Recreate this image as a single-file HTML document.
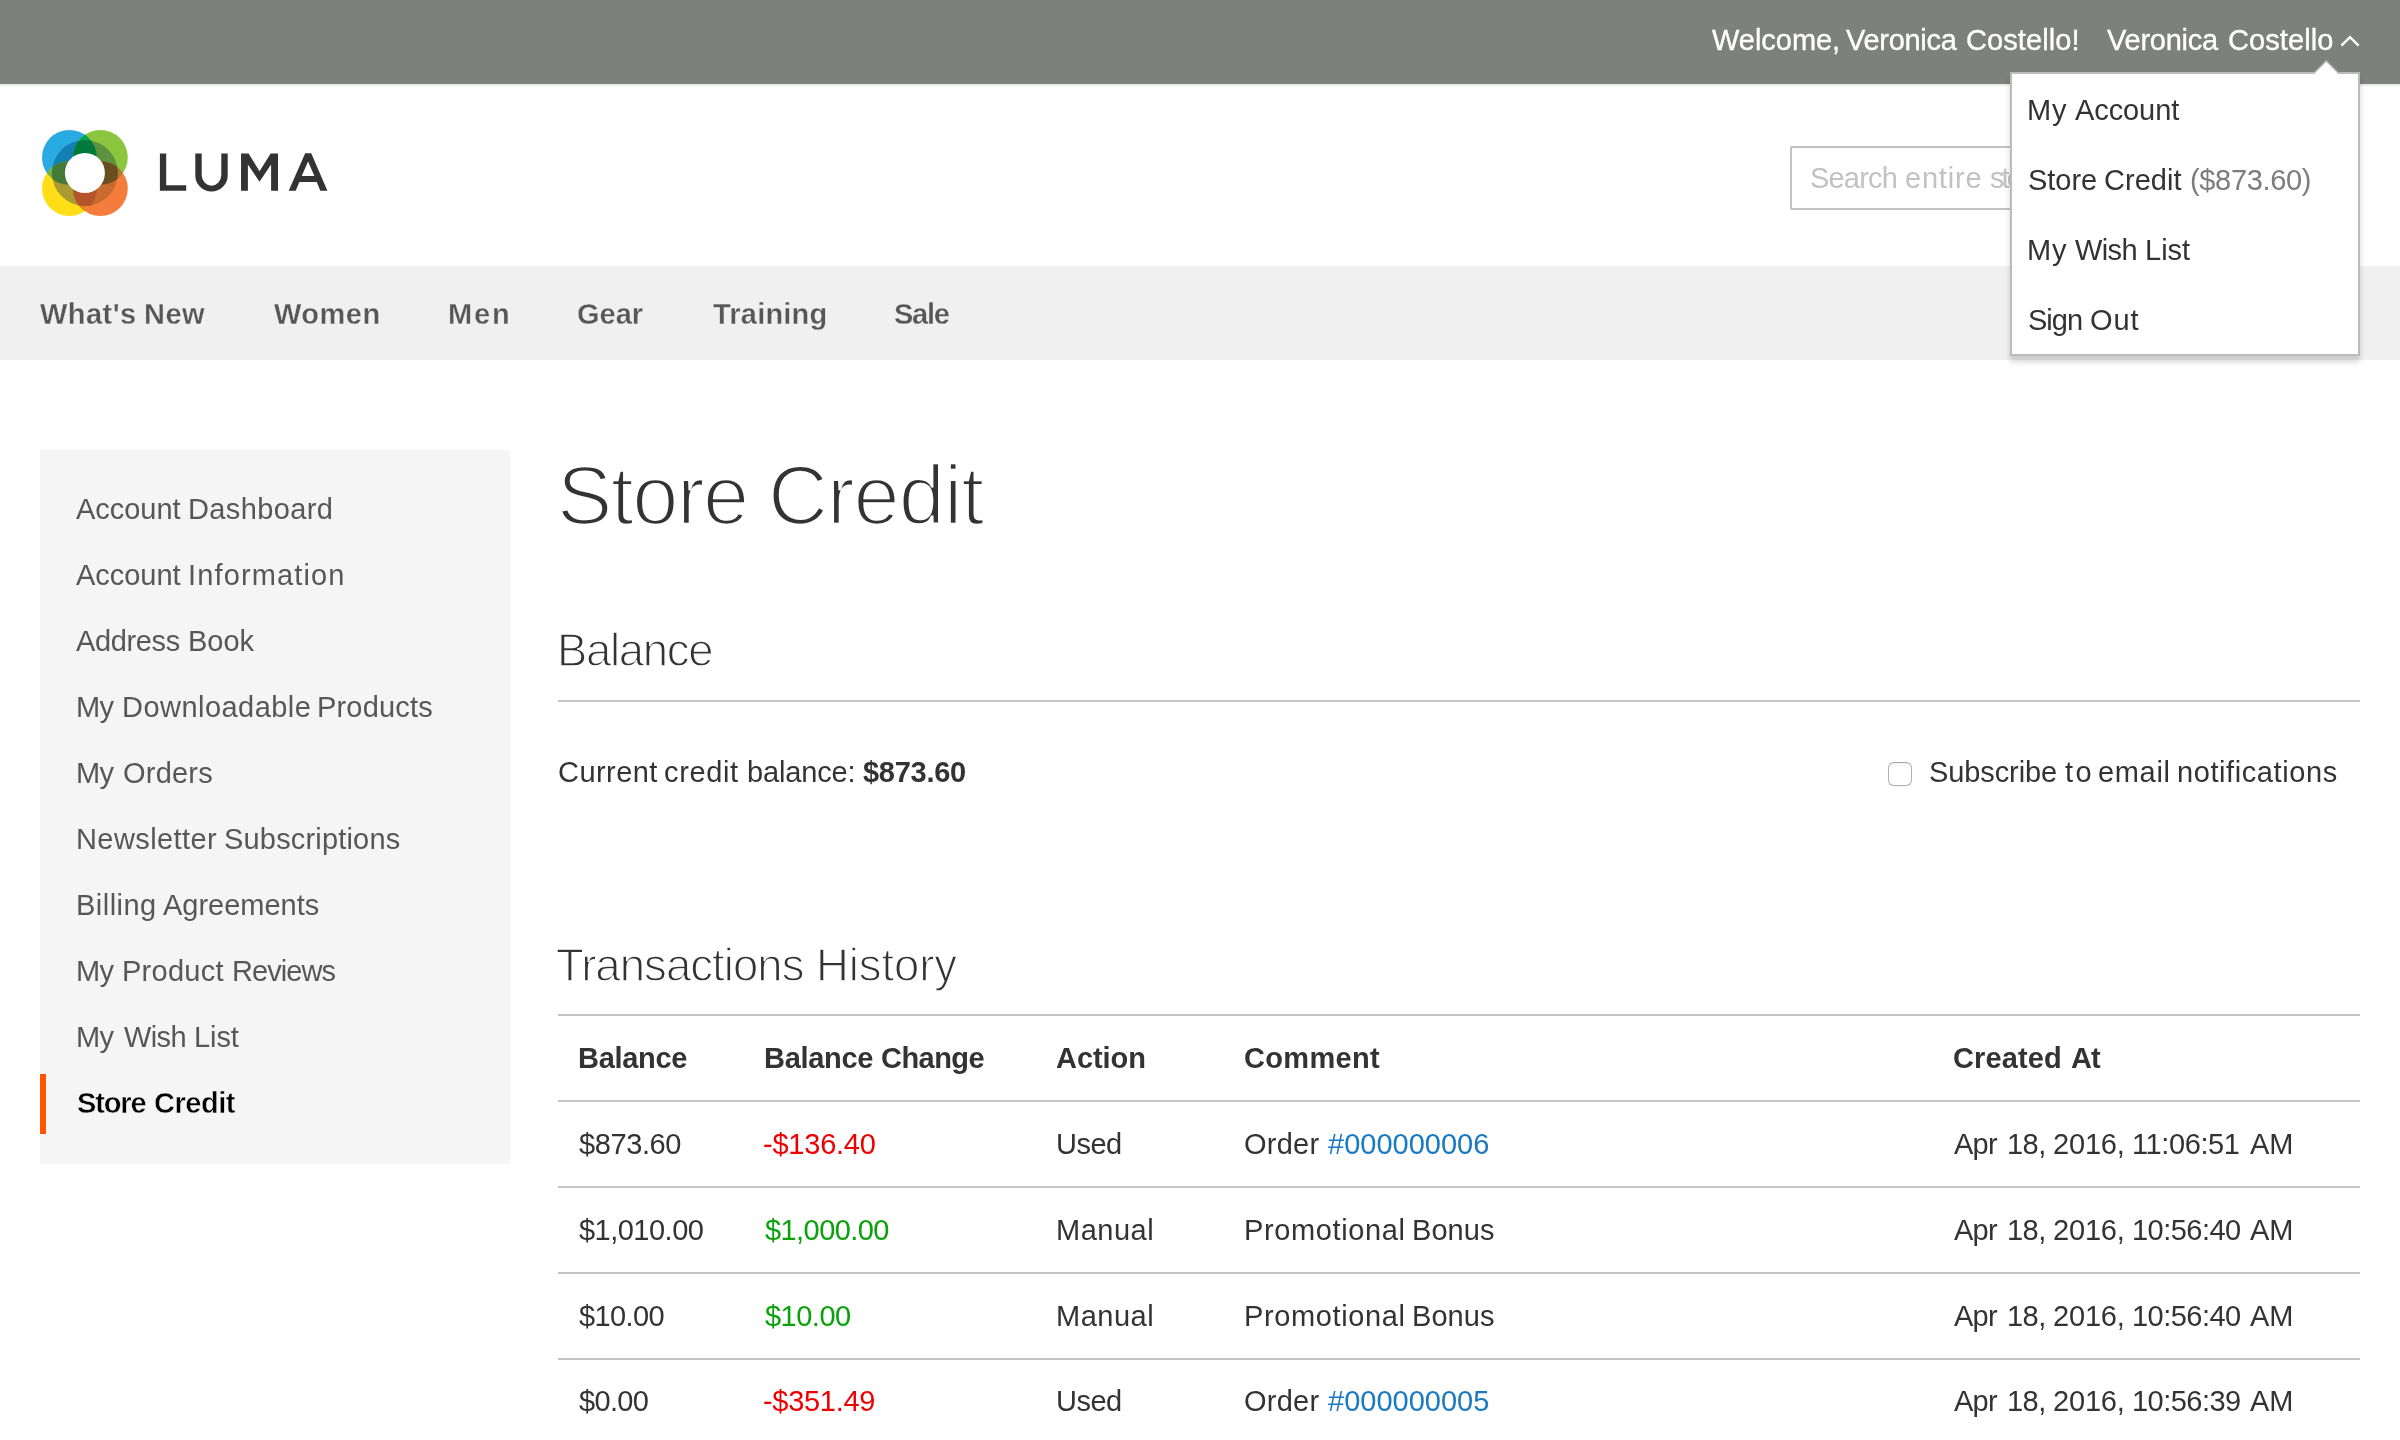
<!DOCTYPE html>
<html lang="en">
<head>
<meta charset="utf-8">
<title>Store Credit</title>
<style>
html,body{margin:0;padding:0;background:#fff;}
body{width:2400px;height:1440px;position:relative;overflow:hidden;font-family:"Liberation Sans",sans-serif;font-size:28px;color:#333;}
.abs{position:absolute;}
.t{position:absolute;white-space:nowrap;line-height:1;will-change:transform;font-family:"Liberation Sans",sans-serif;font-size:29px;}
.light{-webkit-text-stroke-color:#fff;}
.hw{-webkit-text-stroke:0.35px #fff;}
.sbn{-webkit-text-stroke:0.3px #f0f0f0;}
.sbs{-webkit-text-stroke:0.45px #f5f5f5;}
.l80{-webkit-text-stroke-width:2.6px;}
.l44{-webkit-text-stroke-width:1.3px;}
.hdr{left:0;top:0;width:2400px;height:84px;background:#7e807d;}
.hdrline{left:0;top:84px;width:2400px;height:2px;background:#e9eae8;}
.nav{left:0;top:266px;width:2400px;height:94px;background:#f0f0f0;}
.side{left:40px;top:450px;width:470px;height:714px;background:#f5f5f5;}
.cur{left:40px;top:1074px;width:6px;height:60px;background:#ff5501;}
.hr{left:558px;width:1802px;height:2px;background:#c4c4c4;}
.search{left:1790px;top:146px;width:300px;height:60px;border:2px solid #c2c2c2;border-radius:2px;background:#fff;overflow:hidden;}
.dd{left:2010px;top:72px;width:346px;height:280px;background:#fff;border:2px solid #bbb;box-shadow:0 6px 6px rgba(0,0,0,.16);}
.cb{left:1888px;top:762px;width:22px;height:22px;border:1px solid #b1b1b1;border-top-color:#a4a4a4;border-radius:6px;background:linear-gradient(#f4f4f4,#fff 22%,#fff);box-shadow:0 1px 1px rgba(0,0,0,.05);}
</style>
</head>
<body>
<div class="abs hdr"></div>
<div class="abs hdrline"></div>

<!-- logo -->
<svg class="abs" style="left:36px;top:124px" width="300" height="100" viewBox="36 124 300 100">
  <defs>
    <clipPath id="cB"><circle cx="69.4" cy="157.4" r="27.4"/></clipPath>
    <clipPath id="cG"><circle cx="100.4" cy="157.4" r="27.4"/></clipPath>
    <clipPath id="cY"><circle cx="69.4" cy="188.6" r="27.4"/></clipPath>
    <clipPath id="cO"><circle cx="100.4" cy="188.6" r="27.4"/></clipPath>
    <clipPath id="cR"><circle cx="84.9" cy="173" r="33"/></clipPath>
  </defs>
  <!-- outer (light) layer -->
  <circle cx="69.4" cy="157.4" r="27.4" fill="#29abe2"/>
  <circle cx="100.4" cy="157.4" r="27.4" fill="#8cc63f"/>
  <circle cx="69.4" cy="188.6" r="27.4" fill="#ffde17"/>
  <circle cx="100.4" cy="188.6" r="27.4" fill="#f47d3c"/>
  <circle cx="100.4" cy="157.4" r="27.4" fill="#00a651" clip-path="url(#cB)"/>
  <circle cx="69.4" cy="188.6" r="27.4" fill="#72b043" clip-path="url(#cB)"/>
  <circle cx="100.4" cy="188.6" r="27.4" fill="#b07c3a" clip-path="url(#cG)"/>
  <circle cx="100.4" cy="188.6" r="27.4" fill="#f58220" clip-path="url(#cY)"/>
  <!-- inner ring (dark) layer -->
  <g clip-path="url(#cR)">
    <circle cx="69.4" cy="157.4" r="27.4" fill="#1380b4"/>
    <circle cx="100.4" cy="157.4" r="27.4" fill="#5d9340"/>
    <circle cx="69.4" cy="188.6" r="27.4" fill="#a99b32"/>
    <circle cx="100.4" cy="188.6" r="27.4" fill="#c96a31"/>
    <circle cx="100.4" cy="157.4" r="27.4" fill="#00793b" clip-path="url(#cB)"/>
    <circle cx="69.4" cy="188.6" r="27.4" fill="#427a36" clip-path="url(#cB)"/>
    <circle cx="100.4" cy="188.6" r="27.4" fill="#6b4e1f" clip-path="url(#cG)"/>
    <circle cx="100.4" cy="188.6" r="27.4" fill="#b4542a" clip-path="url(#cY)"/>
  </g>
  <circle cx="84.9" cy="173" r="20" fill="#fff"/>
  <!-- LUMA wordmark -->
  <g fill="#333">
    <path d="M159.9,153.5h6.3v31.7h20v5.5h-26.3z"/>
    <path d="M195.3,153.5h6.4v21.6a9.8,10.6 0 0 0 19.6,0v-21.6h6.4v21.8a16.2,16.3 0 0 1 -32.4,0z"/>
    <path d="M241.05,190.7V153.5H248.6L259.5,171.3L270.7,153.5H278V190.7H271.1V164.5L259.5,181.8L247.9,164.5V190.7Z"/>
    <path fill-rule="evenodd" d="M288.7,190.7L305.2,153.2H311.2L327.4,190.7H320.3L316.8,181.9H299.4L295.7,190.7ZM301.7,176H314.4L308.1,161.4Z"/>
  </g>
</svg>

<!-- search -->
<div class="abs search"></div>
<div class="t ph" style="left:1809.60px;top:164.10px;letter-spacing:-0.821px;color:#c2c2c2">Search</div>
<div class="t ph" style="left:1904.60px;top:164.10px;letter-spacing:0.797px;color:#c2c2c2">entire</div>
<div class="t ph" style="left:1990.00px;top:164.10px;letter-spacing:-2.900px;color:#c2c2c2">store here...</div>

<div class="abs nav"></div>
<div class="abs side"></div>
<div class="abs cur"></div>

<div class="abs hr" style="top:700px"></div>
<div class="abs hr" style="top:1014px"></div>
<div class="abs hr" style="top:1100px"></div>
<div class="abs hr" style="top:1186px"></div>
<div class="abs hr" style="top:1272px"></div>
<div class="abs hr" style="top:1358px"></div>

<div class="abs cb"></div>

<div class="t hw" style="left:1711.70px;top:26.00px;letter-spacing:-0.033px;color:#fff">Welcome,</div>
<div class="t hw" style="left:1845.80px;top:26.00px;letter-spacing:-0.290px;color:#fff">Veronica</div>
<div class="t hw" style="left:1965.70px;top:26.00px;letter-spacing:0.091px;color:#fff">Costello!</div>
<div class="t hw" style="left:2107.30px;top:26.00px;letter-spacing:-0.247px;color:#fff">Veronica</div>
<div class="t hw" style="left:2227.70px;top:26.00px;letter-spacing:0.094px;color:#fff">Costello</div>
<div class="t sbn" style="left:40.00px;top:299.75px;letter-spacing:0.446px;color:#575757;font-weight:700">What's</div>
<div class="t sbn" style="left:144.00px;top:299.75px;letter-spacing:0.464px;color:#575757;font-weight:700">New</div>
<div class="t sbn" style="left:274.25px;top:299.75px;letter-spacing:0.506px;color:#575757;font-weight:700">Women</div>
<div class="t sbn" style="left:448.25px;top:299.75px;letter-spacing:1.857px;color:#575757;font-weight:700">Men</div>
<div class="t sbn" style="left:577.25px;top:299.75px;letter-spacing:-0.021px;color:#575757;font-weight:700">Gear</div>
<div class="t sbn" style="left:712.50px;top:299.75px;letter-spacing:0.204px;color:#575757;font-weight:700">Training</div>
<div class="t sbn" style="left:894.25px;top:299.75px;letter-spacing:-1.259px;color:#575757;font-weight:700">Sale</div>
<div class="t" style="left:76.25px;top:495.30px;letter-spacing:-0.038px;color:#575757">Account</div>
<div class="t" style="left:188.00px;top:495.30px;letter-spacing:0.376px;color:#575757">Dashboard</div>
<div class="t" style="left:76.25px;top:561.32px;letter-spacing:-0.038px;color:#575757">Account</div>
<div class="t" style="left:188.00px;top:561.32px;letter-spacing:1.131px;color:#575757">Information</div>
<div class="t" style="left:76.25px;top:627.34px;letter-spacing:-0.356px;color:#575757">Address</div>
<div class="t" style="left:188.00px;top:627.34px;letter-spacing:-0.033px;color:#575757">Book</div>
<div class="t" style="left:76.00px;top:693.36px;letter-spacing:-0.657px;color:#575757">My</div>
<div class="t" style="left:122.25px;top:693.36px;letter-spacing:0.462px;color:#575757">Downloadable</div>
<div class="t" style="left:317.25px;top:693.36px;letter-spacing:0.187px;color:#575757">Products</div>
<div class="t" style="left:76.00px;top:759.38px;letter-spacing:-0.657px;color:#575757">My</div>
<div class="t" style="left:123.25px;top:759.38px;letter-spacing:0.224px;color:#575757">Orders</div>
<div class="t" style="left:75.50px;top:825.40px;letter-spacing:0.419px;color:#575757">Newsletter</div>
<div class="t" style="left:224.30px;top:825.40px;letter-spacing:0.176px;color:#575757">Subscriptions</div>
<div class="t" style="left:75.50px;top:891.42px;letter-spacing:0.476px;color:#575757">Billing</div>
<div class="t" style="left:163.30px;top:891.42px;letter-spacing:-0.017px;color:#575757">Agreements</div>
<div class="t" style="left:76.00px;top:957.44px;letter-spacing:-0.657px;color:#575757">My</div>
<div class="t" style="left:122.25px;top:957.44px;letter-spacing:0.261px;color:#575757">Product</div>
<div class="t" style="left:231.80px;top:957.44px;letter-spacing:-0.914px;color:#575757">Reviews</div>
<div class="t" style="left:76.00px;top:1023.46px;letter-spacing:-0.657px;color:#575757">My</div>
<div class="t" style="left:123.50px;top:1023.46px;letter-spacing:-0.605px;color:#575757">Wish</div>
<div class="t" style="left:193.50px;top:1023.46px;letter-spacing:-0.090px;color:#575757">List</div>
<div class="t sbs" style="left:76.70px;top:1089.40px;letter-spacing:-1.125px;color:#000;font-weight:700">Store</div>
<div class="t sbs" style="left:154.10px;top:1089.40px;letter-spacing:-0.466px;color:#000;font-weight:700">Credit</div>
<div class="t light l80" style="left:556.82px;top:453.75px;letter-spacing:-1.528px;color:#333;font-size:83px">Store</div>
<div class="t light l80" style="left:767.57px;top:453.75px;letter-spacing:-0.996px;color:#333;font-size:83px">Credit</div>
<div class="t light l44" style="left:556.78px;top:627.75px;letter-spacing:-1.324px;color:#333;font-size:45.5px">Balance</div>
<div class="t" style="left:557.75px;top:757.75px;letter-spacing:0.435px;color:#333">Current</div>
<div class="t" style="left:664.00px;top:757.75px;letter-spacing:0.629px;color:#333">credit</div>
<div class="t" style="left:746.50px;top:757.75px;letter-spacing:-0.155px;color:#333">balance:</div>
<div class="t" style="left:863.00px;top:757.75px;letter-spacing:-0.283px;color:#333;font-weight:700">$873.60</div>
<div class="t" style="left:1928.80px;top:757.80px;letter-spacing:-0.104px;color:#333">Subscribe</div>
<div class="t" style="left:2064.50px;top:757.80px;letter-spacing:2.543px;color:#333">to</div>
<div class="t" style="left:2098.00px;top:757.80px;letter-spacing:0.661px;color:#333">email</div>
<div class="t" style="left:2177.30px;top:757.80px;letter-spacing:0.588px;color:#333">notifications</div>
<div class="t light l44" style="left:556.28px;top:942.50px;letter-spacing:-0.941px;color:#333;font-size:45.5px">Transactions</div>
<div class="t light l44" style="left:815.78px;top:942.50px;letter-spacing:-0.106px;color:#333;font-size:45.5px">History</div>
<div class="t" style="left:577.75px;top:1043.50px;letter-spacing:-0.308px;color:#333;font-weight:700">Balance</div>
<div class="t" style="left:764.00px;top:1043.50px;letter-spacing:-0.308px;color:#333;font-weight:700">Balance</div>
<div class="t" style="left:881.00px;top:1043.50px;letter-spacing:-0.543px;color:#333;font-weight:700">Change</div>
<div class="t" style="left:1056.25px;top:1043.50px;letter-spacing:-0.050px;color:#333;font-weight:700">Action</div>
<div class="t" style="left:1244.00px;top:1043.50px;letter-spacing:0.321px;color:#333;font-weight:700">Comment</div>
<div class="t" style="left:1953.40px;top:1043.50px;letter-spacing:0.138px;color:#333;font-weight:700">Created</div>
<div class="t" style="left:2071.10px;top:1043.50px;letter-spacing:-0.943px;color:#333;font-weight:700">At</div>
<div class="t" style="left:578.75px;top:1129.60px;letter-spacing:-0.408px;color:#333">$873.60</div>
<div class="t" style="left:763.25px;top:1129.60px;letter-spacing:-0.229px;color:#ee0000">-$136.40</div>
<div class="t" style="left:1055.50px;top:1129.60px;letter-spacing:-0.524px;color:#333">Used</div>
<div class="t" style="left:1244.00px;top:1129.60px;letter-spacing:0.257px;color:#333">Order</div>
<div class="t" style="left:1328.00px;top:1129.60px;letter-spacing:0.010px;color:#1979c3">#000000006</div>
<div class="t" style="left:1954.40px;top:1129.60px;letter-spacing:-0.736px;color:#333">Apr</div>
<div class="t" style="left:2007.10px;top:1129.60px;letter-spacing:-0.528px;color:#333">18,</div>
<div class="t" style="left:2052.70px;top:1129.60px;letter-spacing:-0.178px;color:#333">2016,</div>
<div class="t" style="left:2131.80px;top:1129.60px;letter-spacing:-0.401px;color:#333">11:06:51</div>
<div class="t" style="left:2249.90px;top:1129.60px;letter-spacing:-0.043px;color:#333">AM</div>
<div class="t" style="left:578.75px;top:1215.50px;letter-spacing:-0.517px;color:#333">$1,010.00</div>
<div class="t" style="left:765.00px;top:1215.50px;letter-spacing:-0.579px;color:#0aa10a">$1,000.00</div>
<div class="t" style="left:1055.50px;top:1215.50px;letter-spacing:0.516px;color:#333">Manual</div>
<div class="t" style="left:1243.50px;top:1215.50px;letter-spacing:0.620px;color:#333">Promotional</div>
<div class="t" style="left:1411.75px;top:1215.50px;letter-spacing:0.068px;color:#333">Bonus</div>
<div class="t" style="left:1954.40px;top:1215.50px;letter-spacing:-0.736px;color:#333">Apr</div>
<div class="t" style="left:2007.10px;top:1215.50px;letter-spacing:-0.528px;color:#333">18,</div>
<div class="t" style="left:2052.70px;top:1215.50px;letter-spacing:-0.178px;color:#333">2016,</div>
<div class="t" style="left:2131.80px;top:1215.50px;letter-spacing:-0.522px;color:#333">10:56:40</div>
<div class="t" style="left:2249.90px;top:1215.50px;letter-spacing:-0.043px;color:#333">AM</div>
<div class="t" style="left:578.75px;top:1301.50px;letter-spacing:-0.614px;color:#333">$10.00</div>
<div class="t" style="left:765.00px;top:1301.50px;letter-spacing:-0.514px;color:#0aa10a">$10.00</div>
<div class="t" style="left:1055.50px;top:1301.50px;letter-spacing:0.516px;color:#333">Manual</div>
<div class="t" style="left:1243.50px;top:1301.50px;letter-spacing:0.620px;color:#333">Promotional</div>
<div class="t" style="left:1411.75px;top:1301.50px;letter-spacing:0.068px;color:#333">Bonus</div>
<div class="t" style="left:1954.40px;top:1301.50px;letter-spacing:-0.736px;color:#333">Apr</div>
<div class="t" style="left:2007.10px;top:1301.50px;letter-spacing:-0.528px;color:#333">18,</div>
<div class="t" style="left:2052.70px;top:1301.50px;letter-spacing:-0.178px;color:#333">2016,</div>
<div class="t" style="left:2131.80px;top:1301.50px;letter-spacing:-0.522px;color:#333">10:56:40</div>
<div class="t" style="left:2249.90px;top:1301.50px;letter-spacing:-0.043px;color:#333">AM</div>
<div class="t" style="left:578.75px;top:1387.40px;letter-spacing:-0.673px;color:#333">$0.00</div>
<div class="t" style="left:763.25px;top:1387.40px;letter-spacing:-0.301px;color:#ee0000">-$351.49</div>
<div class="t" style="left:1055.50px;top:1387.40px;letter-spacing:-0.524px;color:#333">Used</div>
<div class="t" style="left:1244.00px;top:1387.40px;letter-spacing:0.257px;color:#333">Order</div>
<div class="t" style="left:1328.00px;top:1387.40px;letter-spacing:0.010px;color:#1979c3">#000000005</div>
<div class="t" style="left:1954.40px;top:1387.40px;letter-spacing:-0.736px;color:#333">Apr</div>
<div class="t" style="left:2007.10px;top:1387.40px;letter-spacing:-0.528px;color:#333">18,</div>
<div class="t" style="left:2052.70px;top:1387.40px;letter-spacing:-0.178px;color:#333">2016,</div>
<div class="t" style="left:2131.80px;top:1387.40px;letter-spacing:-0.522px;color:#333">10:56:39</div>
<div class="t" style="left:2249.90px;top:1387.40px;letter-spacing:-0.043px;color:#333">AM</div>

<!-- header chevron -->
<svg class="abs" style="left:2336px;top:30px" width="28" height="22" viewBox="2336 30 28 22">
  <path d="M2341.4,45.6L2350,37.2L2358.6,45.6" fill="none" stroke="#fff" stroke-width="2.4"/>
</svg>

<!-- account dropdown -->
<div class="abs dd"></div>
<svg class="abs" style="left:2310px;top:56px" width="34" height="20" viewBox="2310 56 34 20">
  <path d="M2312.25,74L2326.25,60L2340.25,74Z" fill="#bbb"/>
  <path d="M2314.25,74L2326.25,62L2338.25,74Z" fill="#fff"/>
</svg>
<div class="t ddt" style="left:2027.20px;top:96.00px;letter-spacing:0.743px;color:#333">My</div>
<div class="t ddt" style="left:2075.40px;top:96.00px;letter-spacing:-0.088px;color:#333">Account</div>
<div class="t ddt" style="left:2027.75px;top:166.00px;letter-spacing:-0.034px;color:#333">Store</div>
<div class="t ddt" style="left:2104.20px;top:166.00px;letter-spacing:0.040px;color:#333">Credit</div>
<div class="t ddt" style="left:2189.60px;top:166.00px;letter-spacing:-0.336px;color:#7d7d7d">($873.60)</div>
<div class="t ddt" style="left:2027.20px;top:236.00px;letter-spacing:0.743px;color:#333">My</div>
<div class="t ddt" style="left:2075.40px;top:236.00px;letter-spacing:-0.605px;color:#333">Wish</div>
<div class="t ddt" style="left:2144.90px;top:236.00px;letter-spacing:0.010px;color:#333">List</div>
<div class="t ddt" style="left:2027.75px;top:306.00px;letter-spacing:-0.988px;color:#333">Sign</div>
<div class="t ddt" style="left:2090.00px;top:306.00px;letter-spacing:0.907px;color:#333">Out</div>
</body>
</html>
